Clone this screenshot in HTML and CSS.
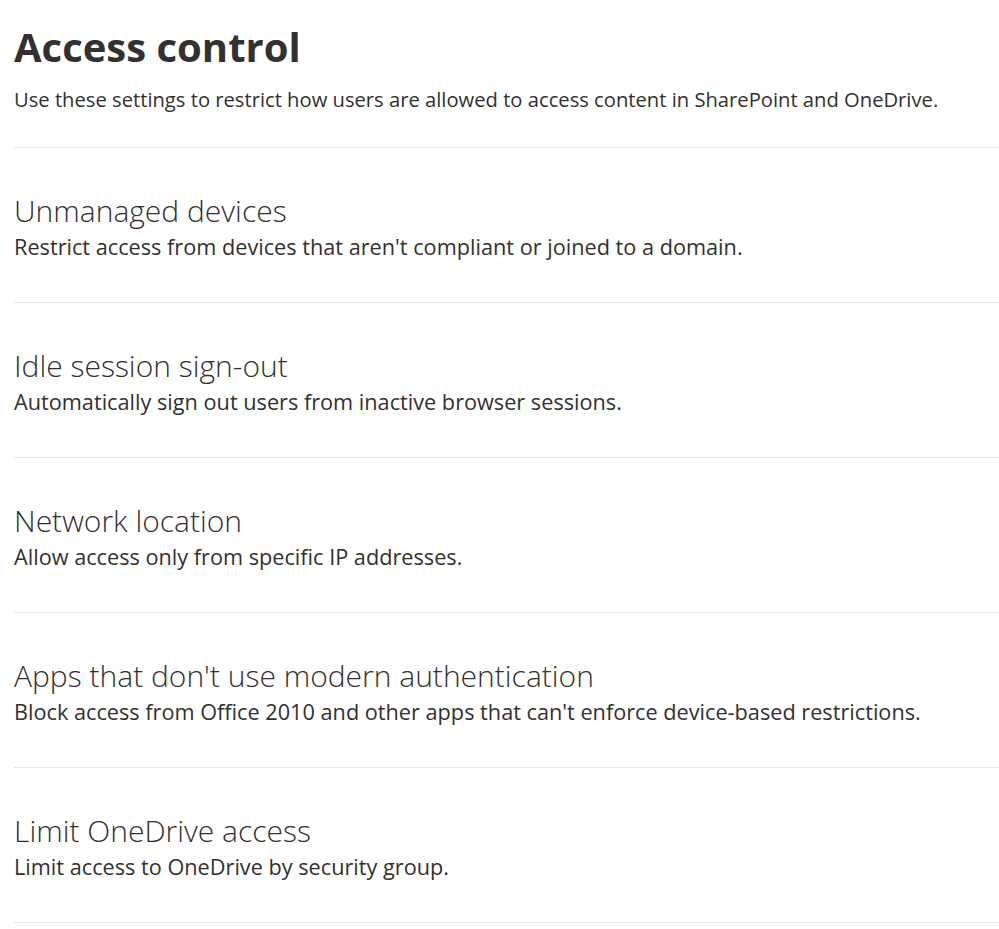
FILE: index.html
```html
<html>
<head>
	<meta charset="utf-8">
	<title>Access control</title>
	<link rel="stylesheet" href="styles.css">
</head>
<body>

<div class="page">
	<h1 class="page-title">Access control</h1>
	<p class="page-intro">Use these settings to restrict how users are allowed to access content in SharePoint and OneDrive.</p>

	<ul class="settings">
		<li class="setting">
			<h2 class="setting-title">Unmanaged devices</h2>
			<p class="setting-desc">Restrict access from devices that aren't compliant or joined to a domain.</p>
		</li>
		<li class="setting">
			<h2 class="setting-title">Idle session sign-out</h2>
			<p class="setting-desc">Automatically sign out users from inactive browser sessions.</p>
		</li>
		<li class="setting">
			<h2 class="setting-title">Network location</h2>
			<p class="setting-desc">Allow access only from specific IP addresses.</p>
		</li>
		<li class="setting">
			<h2 class="setting-title">Apps that don't use modern authentication</h2>
			<p class="setting-desc">Block access from Office 2010 and other apps that can't enforce device-based restrictions.</p>
		</li>
		<li class="setting">
			<h2 class="setting-title">Limit OneDrive access</h2>
			<p class="setting-desc">Limit access to OneDrive by security group.</p>
		</li>
	</ul>
</div>

</body>
</html>
```

FILE: styles.css
```css
body {
	margin: 0;
	background: #fff;
	color: #323130;
	font-family: "Open Sans", "Noto Sans", sans-serif;
}

.page {
	padding-left: 14px;
}

.page-title {
	margin: 20px 0 0 0;
	font-size: 40px;
	line-height: 54px;
	font-weight: 700;
}

.page-intro {
	margin: 11px 0 0 0;
	font-size: 20.2px;
	line-height: 28px;
}

/* list of settings, each row closed by a thin rule */
.settings {
	list-style: none;
	margin: 34px 0 0 0;
	padding: 0;
	border-top: 1px solid #e6e6e6;
}

.setting {
	padding: 44px 0 40px 0;
	border-bottom: 1px solid #e6e6e6;
}

.setting-title {
	margin: 0;
	font-size: 30px;
	line-height: 38px;
	font-weight: 300;
}

.setting-desc {
	margin: 2px 0 0 0;
	font-size: 21.7px;
	line-height: 30px;
}
```
